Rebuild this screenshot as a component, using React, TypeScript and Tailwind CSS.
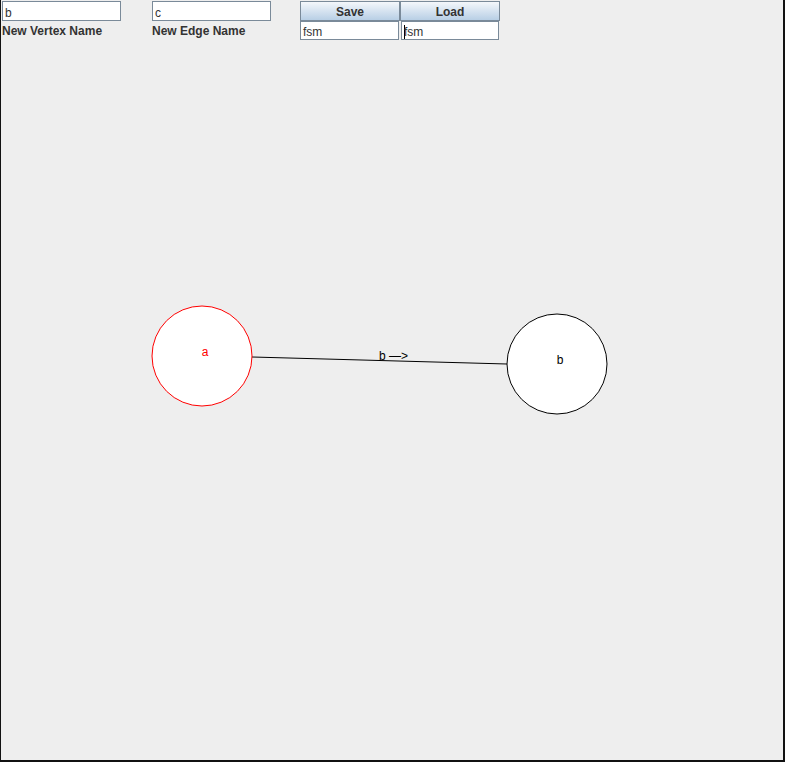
const font = { fontFamily: '"Liberation Sans", Arial, sans-serif' };

const Field = ({ value, w, h = "h-[20px]", caret }: { value: string; w: string; h?: string; caret?: boolean }) => (
  <div className={`${w} ${h} bg-white border border-[#7a8a99] flex items-center pl-[2px] pt-[3px] text-[12px] text-[#333333] leading-none`}>
    {caret && <span className="w-px h-[14px] bg-black mr-[-1px]" />}
    {value}
  </div>
);

const Btn = ({ label }: { label: string }) => (
  <div className="w-[100px] h-[20px] border border-[#7a8a99] bg-gradient-to-b from-[#f4f7fb] to-[#b8cfe5] flex items-center justify-center pt-px text-[12px] font-bold text-[#333333]">
    {label}
  </div>
);

const App = () => {
  return (
    <div
      className="w-[785px] h-[762px] bg-[#eeeeee] border-l border-r-2 border-b-2 border-[#111111] relative overflow-hidden"
      style={font}
    >
      <div className="flex pt-px">
        <div className="ml-px w-[119px] flex flex-col">
          <Field value="b" w="w-[119px]" />
          <div className="mt-[3px] text-[12px] font-bold text-[#333333] leading-[14px]">New Vertex Name</div>
        </div>
        <div className="ml-[31px] w-[119px] flex flex-col">
          <Field value="c" w="w-[119px]" />
          <div className="mt-[3px] text-[12px] font-bold text-[#333333] leading-[14px]">New Edge Name</div>
        </div>
        <div className="ml-[29px] flex flex-col">
          <div className="flex">
            <Btn label="Save" />
            <Btn label="Load" />
          </div>
          <div className="flex">
            <div className="mr-[2px]">
              <Field value="fsm" w="w-[99px]" h="h-[19px]" />
            </div>
            <Field value="fsm" w="w-[98px]" h="h-[19px]" caret />
          </div>
        </div>
      </div>

      <svg className="absolute left-0 top-0" width="785" height="762" style={font}>
        <line x1="251" y1="357" x2="506" y2="364" stroke="#000" strokeWidth="1" />
        <circle cx="201" cy="356" r="50" fill="#fff" stroke="#ff0000" strokeWidth="1" />
        <text x="204" y="356" fontSize="12" fill="#ff0000" textAnchor="middle">a</text>
        <circle cx="556" cy="364" r="50" fill="#fff" stroke="#000" strokeWidth="1" />
        <text x="559" y="364" fontSize="12" fill="#000" textAnchor="middle">b</text>
        <text x="378" y="360" fontSize="12" fill="#000">b —&gt;</text>
      </svg>
    </div>
  );
};

export default App;
